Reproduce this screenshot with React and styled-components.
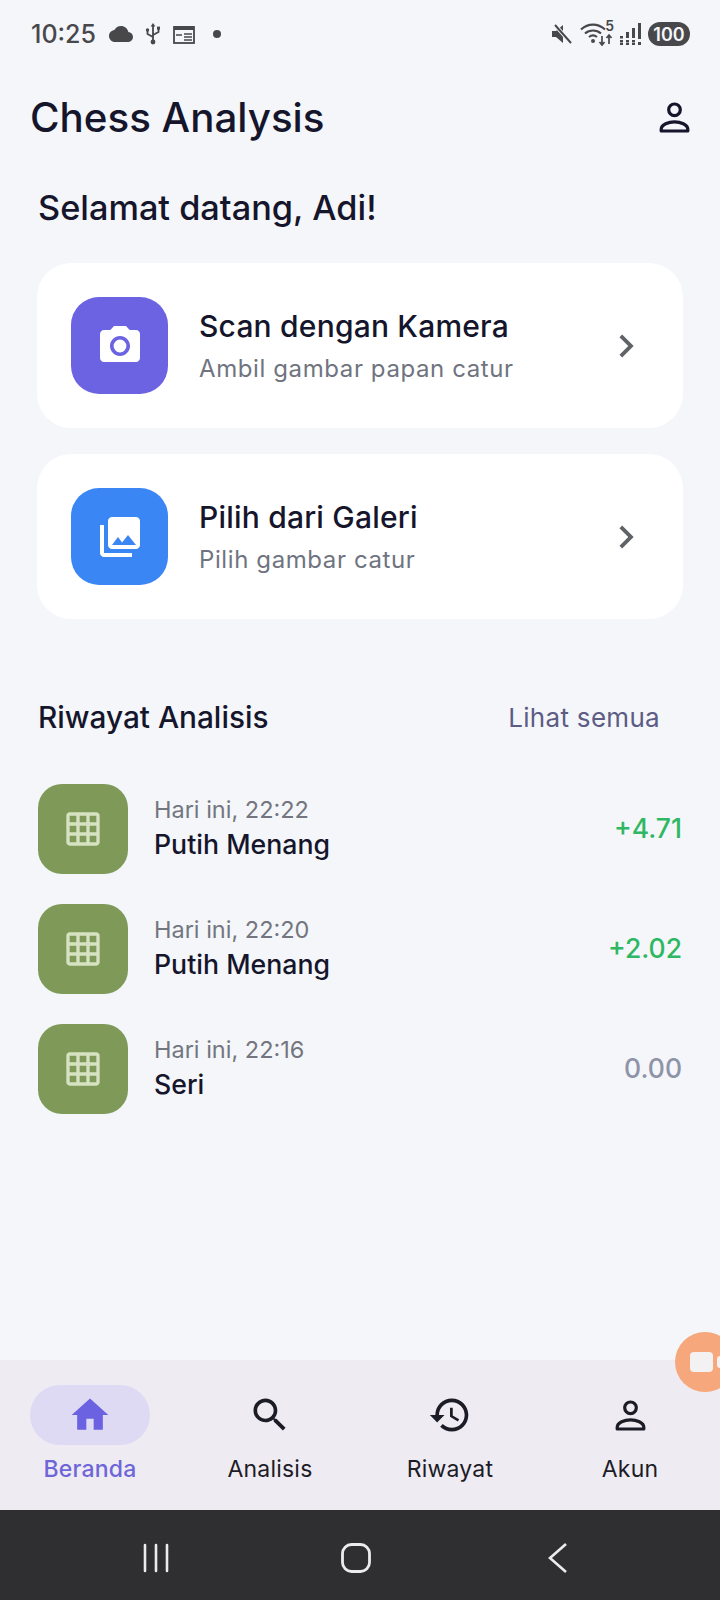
import React from "react";
import styled, { createGlobalStyle } from "styled-components";

const GlobalStyle = createGlobalStyle`
  html, body {
    margin: 0;
    padding: 0;
    background: #f4f6fa;
    font-family: Inter, "Noto Sans", sans-serif;
  }
  * {
    box-sizing: border-box;
  }
`;

const Screen = styled.div`
  position: relative;
  width: 720px;
  height: 1600px;
  overflow: hidden;
  display: flex;
  flex-direction: column;
  background: #f4f6fa;
`;

const StatusBar = styled.div`
  height: 68px;
  padding: 0 30px 0 31px;
  display: flex;
  align-items: center;
  justify-content: space-between;
  color: #48484b;
`;

const StatusGroup = styled.div`
  display: flex;
  align-items: center;
  gap: ${(p) => p.$gap || 8}px;
`;

const Clock = styled.span`
  font-size: 25px;
  font-weight: 500;
  margin-right: 1px;
`;

const Dot = styled.span`
  width: 8px;
  height: 8px;
  border-radius: 50%;
  background: #48484b;
  margin-left: 6px;
`;

const WifiWrap = styled.div`
  position: relative;
  width: 33px;
  height: 24px;
`;

const WifiBand = styled.span`
  position: absolute;
  right: -1px;
  top: -3px;
  font-size: 14px;
  font-weight: 600;
  line-height: 14px;
`;

const Battery = styled.div`
  width: 42px;
  height: 24px;
  border-radius: 12px;
  background: #48484b;
  color: #f4f6fa;
  font-size: 18px;
  font-weight: 600;
  display: flex;
  align-items: center;
  justify-content: center;
`;

const Main = styled.main`
  flex: 1;
  display: flex;
  flex-direction: column;
`;

const Header = styled.header`
  height: 82px;
  margin-top: 8px;
  padding: 0 23px 0 30px;
  display: flex;
  align-items: center;
  justify-content: space-between;
`;

const AppTitle = styled.h1`
  margin: 0;
  font-size: 40.3px;
  font-weight: 500;
  color: #15152b;
`;

const Content = styled.div`
  padding: 0 37px;
`;

const Welcome = styled.h2`
  margin: 27px 0 32px 1px;
  font-size: 34.3px;
  line-height: 46px;
  font-weight: 500;
  color: #15152b;
`;

const ActionCard = styled.div`
  height: 165px;
  margin-bottom: 26px;
  padding: 0 34px;
  border-radius: 34px;
  background: #fff;
  display: flex;
  align-items: center;
`;

const ActionIcon = styled.div`
  width: 97px;
  height: 97px;
  border-radius: 28px;
  background: ${(p) => p.$color};
  display: flex;
  align-items: center;
  justify-content: center;
  flex-shrink: 0;
`;

const ActionText = styled.div`
  flex: 1;
  margin-left: 31px;
`;

const ActionTitle = styled.div`
  font-size: 30px;
  line-height: 40px;
  letter-spacing: 0.2px;
  font-weight: 500;
  color: #15152b;
`;

const ActionSub = styled.div`
  margin-top: 6px;
  font-size: 24px;
  line-height: 34px;
  letter-spacing: 0.6px;
  color: #6f7480;
`;

const SectionHead = styled.div`
  margin-top: 76px;
  margin-bottom: 45px;
  padding-right: 23px;
  display: flex;
  align-items: center;
  justify-content: space-between;
`;

const SectionTitle = styled.h3`
  margin: 0 0 0 1px;
  font-size: 29.8px;
  line-height: 44px;
  font-weight: 500;
  color: #15152b;
`;

const SeeAll = styled.span`
  font-size: 26px;
  letter-spacing: 0.3px;
  color: #5c5c85;
`;

const HistoryList = styled.div`
  display: flex;
  flex-direction: column;
  gap: 30px;
`;

const HistoryRow = styled.div`
  display: flex;
  align-items: center;
`;

const Thumb = styled.div`
  width: 90px;
  height: 90px;
  margin-left: 1px;
  border-radius: 24px;
  background: #7f9a58;
  display: flex;
  align-items: center;
  justify-content: center;
  flex-shrink: 0;
`;

const HistoryText = styled.div`
  flex: 1;
  margin-left: 26px;
  padding-bottom: 4px;
`;

const HistoryDate = styled.div`
  font-size: 23.5px;
  line-height: 32px;
  color: #73757f;
`;

const HistoryName = styled.div`
  margin-top: 2px;
  font-size: 26.7px;
  line-height: 33px;
  font-weight: 500;
  color: #15152b;
`;

const Score = styled.div`
  margin: 0 1px 2px 0;
  font-size: 26.5px;
  font-weight: 500;
  color: ${(p) => p.$color};
`;

const BottomNav = styled.nav`
  height: 150px;
  padding-top: 25px;
  background: #eeebf3;
  display: grid;
  grid-template-columns: repeat(4, 180px);
`;

const NavItem = styled.div`
  display: flex;
  flex-direction: column;
  align-items: center;
`;

const NavIcon = styled.div`
  width: 120px;
  height: 60px;
  border-radius: 30px;
  background: ${(p) => (p.$active ? "#dedaf3" : "transparent")};
  display: flex;
  align-items: center;
  justify-content: center;
`;

const NavLabel = styled.span`
  margin-top: 8px;
  font-size: 23px;
  line-height: 32px;
  letter-spacing: 0.2px;
  font-weight: ${(p) => (p.$active ? 500 : 400)};
  color: ${(p) => (p.$active ? "#6e66d8" : "#1c1c26")};
`;

const SystemBar = styled.div`
  height: 90px;
  padding: 5px 0 0 78px;
  background: #2f2f31;
  display: grid;
  grid-template-columns: 155px 246px 158px;
  justify-items: center;
  align-items: center;
`;

const RecorderBubble = styled.div`
  position: absolute;
  left: 675px;
  top: 1332px;
  width: 60px;
  height: 60px;
  border-radius: 50%;
  background: #f6a77c;
  display: flex;
  align-items: center;
  gap: 4px;
  padding-left: 15px;
  overflow: hidden;
`;

const RecorderCam = styled.div`
  width: 23px;
  height: 20px;
  border-radius: 4px;
  background: #f4f1f2;
  flex-shrink: 0;
`;

const RecorderLens = styled.div`
  width: 10px;
  height: 12px;
  border-radius: 3px;
  background: #f4f1f2;
  flex-shrink: 0;
`;

const Icon = ({ d, size = 24, color = "currentColor" }) => (
  <svg width={size} height={size} viewBox="0 0 24 24" fill={color}>
    <path d={d} />
  </svg>
);

const PersonGlyph = ({ color }) => (
  <svg width="45" height="45" viewBox="0 0 24 24" fill="none" stroke={color} strokeWidth="1.7">
    <circle cx="12" cy="7.9" r="3.1" />
    <path d="M4.9 19.2v-.9c0-2.6 4-4 7.1-4s7.1 1.4 7.1 4v.9z" strokeLinejoin="round" />
  </svg>
);

const paths = {
  camera:
    "M12 8.8a3.2 3.2 0 1 0 0 6.4 3.2 3.2 0 0 0 0-6.4zM9 2L7.17 4H4c-1.1 0-2 .9-2 2v12c0 1.1.9 2 2 2h16c1.1 0 2-.9 2-2V6c0-1.1-.9-2-2-2h-3.17L15 2H9zm3 15c-2.76 0-5-2.24-5-5s2.24-5 5-5 5 2.24 5 5-2.24 5-5 5z",
  gallery:
    "M22 16V4c0-1.1-.9-2-2-2H8c-1.1 0-2 .9-2 2v12c0 1.1.9 2 2 2h12c1.1 0 2-.9 2-2zm-11-4l2.03 2.71L16 11l4 5H8l3-4zM2 6v14c0 1.1.9 2 2 2h14v-2H4V6H2z",
  grid:
    "M20 2H4c-1.1 0-2 .9-2 2v16c0 1.1.9 2 2 2h16c1.1 0 2-.9 2-2V4c0-1.1-.9-2-2-2zM8 20H4v-4h4v4zm0-6H4v-4h4v4zm0-6H4V4h4v4zm6 12h-4v-4h4v4zm0-6h-4v-4h4v4zm0-6h-4V4h4v4zm6 12h-4v-4h4v4zm0-6h-4v-4h4v4zm0-6h-4V4h4v4z",
  home: "M10 20v-6h4v6h5v-8h3L12 3 2 12h3v8z",
  search:
    "M15.5 14h-.79l-.28-.27C15.41 12.59 16 11.11 16 9.5 16 5.91 13.09 3 9.5 3S3 5.91 3 9.5 5.91 16 9.5 16c1.61 0 3.09-.59 4.23-1.57l.27.28v.79l5 4.99L20.49 19l-4.99-5zm-6 0C7.01 14 5 11.99 5 9.5S7.01 5 9.5 5 14 7.01 14 9.5 11.99 14 9.5 14z",
  history:
    "M13 3c-4.97 0-9 4.03-9 9H1l3.89 3.89.07.14L9 12H6c0-3.87 3.13-7 7-7s7 3.13 7 7-3.13 7-7 7c-1.93 0-3.68-.79-4.94-2.06l-1.42 1.42C8.27 19.99 10.51 21 13 21c4.97 0 9-4.03 9-9s-4.03-9-9-9zm-1 5v5l4.28 2.54.72-1.21-3.5-2.08V8H12z",
  chevron: "M10 6L8.59 7.41 13.17 12l-4.58 4.59L10 18l6-6z",
  cloud:
    "M19.35 10.04C18.67 6.59 15.64 4 12 4 9.11 4 6.6 5.64 5.35 8.04 2.34 8.36 0 10.91 0 14c0 3.31 2.69 6 6 6h13c2.76 0 5-2.24 5-5 0-2.64-2.05-4.78-4.65-4.96z",
};

const UsbGlyph = () => (
  <svg width="16" height="22" viewBox="0 0 16 22" fill="none" stroke="#48484b" strokeWidth="1.8">
    <path d="M8 2v17M2.5 8v3l5.5 3M13.5 6v3L8 12" />
    <path d="M8 0l2.4 3.4H5.6z" fill="#48484b" stroke="none" />
    <circle cx="8" cy="19" r="2.4" fill="#48484b" stroke="none" />
    <circle cx="2.5" cy="7" r="1.7" fill="#48484b" stroke="none" />
    <rect x="12" y="3.6" width="3" height="3" fill="#48484b" stroke="none" />
  </svg>
);

const CalendarGlyph = () => (
  <svg width="22" height="19" viewBox="0 0 22 19" fill="none" stroke="#48484b">
    <rect x="1" y="2" width="20" height="16" strokeWidth="1.8" />
    <path d="M1 1h20v4H1z" fill="#48484b" stroke="none" />
    <path d="M11 9h8M11 12h8M11 15h8M3 10h6" strokeWidth="1.4" />
  </svg>
);

const MuteGlyph = () => (
  <svg width="22" height="20" viewBox="0 0 22 20">
    <path d="M1 7h4l7-6v18l-7-6H1z" fill="#48484b" />
    <path d="M4 1l16 18" stroke="#f4f6fa" strokeWidth="4" />
    <path d="M4 1l16 18" stroke="#48484b" strokeWidth="2" />
  </svg>
);

const WifiGlyph = () => (
  <svg width="33" height="24" viewBox="0 0 33 24" fill="none" stroke="#48484b" strokeWidth="2.2">
    <path d="M1 7.5C8 1 18 1 25 7.5M5 11.5c4.5-4 11.5-4 16 0M9 15c2.5-2 5.5-2 8 0" />
    <circle cx="13" cy="19" r="2" fill="#48484b" stroke="none" />
    <path d="M22 14v9M19.5 20l2.5 3 2.5-3M29 22v-9M26.5 16l2.5-3 2.5 3" strokeWidth="1.7" />
  </svg>
);

const SignalGlyph = () => (
  <svg width="21" height="22" viewBox="0 0 21 22" fill="#48484b">
    <rect x="0" y="13" width="3" height="2.5" />
    <rect x="0" y="17" width="3" height="2.5" />
    <rect x="0" y="20" width="3" height="2" />
    <rect x="6" y="9" width="3" height="6" />
    <rect x="6" y="17" width="3" height="2.5" />
    <rect x="6" y="20" width="3" height="2" />
    <rect x="12" y="5" width="3" height="10" />
    <rect x="12" y="17" width="3" height="2.5" />
    <rect x="12" y="20" width="3" height="2" />
    <rect x="18" y="0" width="3" height="16" />
    <rect x="18" y="19" width="3" height="3" />
  </svg>
);

const BarGlyph = () => (
  <svg width="30" height="30" viewBox="0 0 30 30" stroke="#ececee" strokeWidth="2.6" strokeLinecap="round">
    <path d="M4 2v26M15 2v26M26 2v26" />
  </svg>
);

const HomeGlyph = () => (
  <svg width="30" height="30" viewBox="0 0 30 30" fill="none" stroke="#ececee" strokeWidth="2.8">
    <rect x="1.5" y="1.5" width="27" height="27" rx="9" />
  </svg>
);

const BackGlyph = () => (
  <svg width="20" height="32" viewBox="0 0 20 32" fill="none" stroke="#ececee" strokeWidth="2.6">
    <path d="M18 2L2 16l16 14" />
  </svg>
);

const actions = [
  { title: "Scan dengan Kamera", sub: "Ambil gambar papan catur", color: "#6c63e3", icon: paths.camera },
  { title: "Pilih dari Galeri", sub: "Pilih gambar catur", color: "#3b86f5", icon: paths.gallery },
];

const history = [
  { date: "Hari ini, 22:22", name: "Putih Menang", score: "+4.71", color: "#2fb863" },
  { date: "Hari ini, 22:20", name: "Putih Menang", score: "+2.02", color: "#2fb863" },
  { date: "Hari ini, 22:16", name: "Seri", score: "0.00", color: "#8f93a8" },
];

const navItems = [
  { label: "Beranda", icon: paths.home, active: true },
  { label: "Analisis", icon: paths.search },
  { label: "Riwayat", icon: paths.history },
  { label: "Akun" },
];

export default function App() {
  return (
    <Screen>
      <GlobalStyle />
      <StatusBar>
        <StatusGroup $gap={12}>
          <Clock>10:25</Clock>
          <Icon d={paths.cloud} size={24} color="#48484b" />
          <UsbGlyph />
          <CalendarGlyph />
          <Dot />
        </StatusGroup>
        <StatusGroup $gap={7}>
          <MuteGlyph />
          <WifiWrap>
            <WifiGlyph />
            <WifiBand>5</WifiBand>
          </WifiWrap>
          <SignalGlyph />
          <Battery>100</Battery>
        </StatusGroup>
      </StatusBar>
      <Main>
        <Header>
          <AppTitle>Chess Analysis</AppTitle>
          <PersonGlyph color="#15152b" />
        </Header>
        <Content>
          <Welcome>Selamat datang, Adi!</Welcome>
          {actions.map((a) => (
            <ActionCard key={a.title}>
              <ActionIcon $color={a.color}>
                <Icon d={a.icon} size={48} color="#fff" />
              </ActionIcon>
              <ActionText>
                <ActionTitle>{a.title}</ActionTitle>
                <ActionSub>{a.sub}</ActionSub>
              </ActionText>
              <Icon d={paths.chevron} size={46} color="#5f6368" />
            </ActionCard>
          ))}
          <SectionHead>
            <SectionTitle>Riwayat Analisis</SectionTitle>
            <SeeAll>Lihat semua</SeeAll>
          </SectionHead>
          <HistoryList>
            {history.map((h) => (
              <HistoryRow key={h.date}>
                <Thumb>
                  <Icon d={paths.grid} size={40} color="#d6e2c1" />
                </Thumb>
                <HistoryText>
                  <HistoryDate>{h.date}</HistoryDate>
                  <HistoryName>{h.name}</HistoryName>
                </HistoryText>
                <Score $color={h.color}>{h.score}</Score>
              </HistoryRow>
            ))}
          </HistoryList>
        </Content>
      </Main>
      <BottomNav>
        {navItems.map((n) => (
          <NavItem key={n.label}>
            <NavIcon $active={n.active}>
              {n.icon ? (
                <Icon d={n.icon} size={44} color={n.active ? "#6a62e0" : "#1c1c26"} />
              ) : (
                <PersonGlyph color="#1c1c26" />
              )}
            </NavIcon>
            <NavLabel $active={n.active}>{n.label}</NavLabel>
          </NavItem>
        ))}
      </BottomNav>
      <SystemBar>
        <BarGlyph />
        <HomeGlyph />
        <BackGlyph />
      </SystemBar>
      <RecorderBubble>
        <RecorderCam />
        <RecorderLens />
      </RecorderBubble>
    </Screen>
  );
}
